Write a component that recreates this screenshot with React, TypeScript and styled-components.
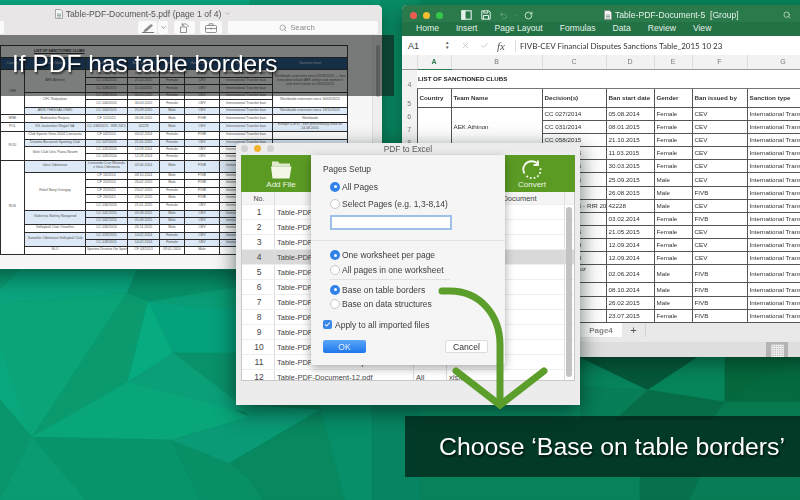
import React from "react";
import styled, { createGlobalStyle } from "styled-components";
import { Check, ChevronDown, RotateCw, Search, Undo2, X } from "lucide-react";

const GlobalStyle = createGlobalStyle`
  html, body { margin: 0; padding: 0; background: #07845c; }
  * { box-sizing: border-box; }
`;

const SANS = `"Liberation Sans", Arial, sans-serif`;

/* ---------- desktop ---------- */
const Stage = styled.div`
  position: relative;
  width: 800px;
  height: 500px;
  overflow: hidden;
  font-family: ${SANS};
`;

const Wallpaper = styled.svg`
  position: absolute;
  inset: 0;
  display: block;
`;

const facets: [string, string][] = [
  ["0,0 800,0 800,500 0,500", "#07845c"],
  ["0,0 250,0 250,270 0,270", "#0bae86"],
  ["250,0 420,0 400,170 250,170", "#0a9f76"],
  ["420,0 800,0 800,20 420,20", "#08895e"],
  ["380,0 420,0 420,170 380,170", "#0a9169"],
  ["0,303 127,293 32,437 0,345", "#0ba378"],
  ["0,270 20,270 0,290", "#0a9a72"],
  ["20,270 137,270 127,293 0,303 0,290", "#0aa47e"],
  ["137,270 250,270 250,290 148,302 127,293", "#078f68"],
  ["148,302 250,285 250,312", "#0a9c74"],
  ["127,293 148,302 128,382 32,437", "#0a9a6e"],
  ["148,302 250,312 250,353 173,353", "#05a07c"],
  ["148,302 173,353 128,382", "#06ab7f"],
  ["173,353 250,353 250,412", "#09916a"],
  ["128,382 173,353 250,412 233,410", "#0b9f78"],
  ["32,437 128,382 233,410 250,417 172,440", "#09a67a"],
  ["0,345 32,437 0,400", "#0aa77c"],
  ["0,400 32,437 0,500", "#0a966c"],
  ["32,437 172,440 200,500 85,500", "#08946a"],
  ["32,437 85,500 0,500", "#0b9b72"],
  ["172,440 250,417 262,500 200,500", "#098f66"],
  ["240,405 320,410 230,463 172,440 250,417", "#0a9a75"],
  ["230,463 320,410 330,410 345,500 262,500 250,480", "#08885f"],
  ["320,405 372,405 372,500 345,500", "#078f69"],
  ["372,405 420,405 420,500 372,500", "#078562"],
  ["420,477 640,477 640,500 420,500", "#07825a"],
  ["640,477 700,477 690,500 640,500", "#07714e"],
  ["700,477 800,477 800,500 690,500", "#077c56"],
  ["580,357 698,357 648,390", "#05583a"],
  ["698,357 725,357 725,402 648,390", "#07855a"],
  ["725,357 800,357 725,402", "#05673c"],
  ["725,402 800,357 800,402", "#056a40"],
  ["580,386 648,390 615,420 580,420", "#077d58"],
  ["648,390 725,402 712,420 615,420", "#066d46"],
  ["725,402 800,402 800,420 712,420", "#07794f"],
  ["420,405 580,405 580,420 420,420", "#0a8a64"],
];

const Banner = styled.div<{ $tone: "grey" | "green" }>`
  position: absolute;
  display: flex;
  align-items: center;
  color: #fff;
  background: ${(p) => (p.$tone === "grey" ? "rgba(20, 22, 22, 0.56)" : "rgba(0, 15, 10, 0.64)")};
  text-shadow: 1px 2px 2px rgba(0, 0, 0, 0.65);
`;

const TopBanner = styled(Banner)`
  left: 0;
  top: 35px;
  width: 394px;
  height: 61px;
  padding: 0 0 3px 12px;
  font-size: 24.5px;
`;

const BottomBanner = styled(Banner)`
  left: 405px;
  top: 416px;
  width: 395px;
  height: 61px;
  padding: 0 0 0 34px;
  font-size: 24.8px;
  white-space: nowrap;
`;

const Arrow = styled.svg`
  position: absolute;
  left: 430px;
  top: 280px;
  filter: blur(0.3px);
`;

/* ---------- preview window ---------- */
const PreviewWindow = styled.div`
  position: absolute;
  left: -100px;
  top: 5px;
  width: 482px;
  height: 264px;
  display: flex;
  flex-direction: column;
  border-radius: 5px 5px 0 0;
  overflow: hidden;
  background: #f6f6f6;
  box-shadow: 0 6px 22px rgba(0, 30, 20, 0.55);
  filter: blur(0.3px);
`;

const PreviewTitle = styled.div`
  height: 15px;
  display: flex;
  align-items: center;
  justify-content: center;
  gap: 3px;
  padding: 2px 0 0 4px;
  background: #e8e6e7;
  color: #555;
  font-size: 8.6px;
  white-space: nowrap;
`;

const PreviewToolbar = styled.div`
  height: 15px;
  display: flex;
  align-items: flex-start;
  padding: 1px 4px 0 0;
  background: #e8e6e7;
`;

const ToolChip = styled.div<{ $w: number; $gap?: number }>`
  width: ${(p) => p.$w}px;
  height: 13px;
  margin-right: ${(p) => p.$gap ?? 0}px;
  display: flex;
  align-items: center;
  justify-content: center;
  gap: 3px;
  border-radius: 2px;
  background: #fafafa;
  color: #8a8a8a;
  font-size: 7.8px;
`;

const LeftChip = styled(ToolChip)`
  margin-right: 134px;
`;

const SearchChip = styled(ToolChip)`
  padding-right: 12px;
`;

const PreviewBody = styled.div`
  flex: 1;
  display: flex;
  min-height: 0;
`;

const PageArea = styled.div`
  flex: 1;
  padding: 10px 0 0 100px;
  background: #f7f7f7;
  overflow: hidden;
`;

const Track = styled.div`
  width: 10px;
  padding: 10px 2px 0 3px;
  background: #efefef;
  border-left: 1px solid #e0e0e0;
`;

const Thumb = styled.div`
  height: 52px;
  border-radius: 3px;
  background: #b9b9b9;
`;

const PdfTable = styled.table`
  width: 347px;
  table-layout: fixed;
  border-collapse: collapse;
  background: #fff;
  color: #555;
  font-size: 3.5px;
  line-height: 3.8px;
  text-align: center;
`;

const PdfCell = styled.td<{ $blue?: boolean }>`
  padding: 0 1px;
  border: 1px solid #2c2c2c;
  overflow: hidden;
  white-space: nowrap;
  background: ${(p) => (p.$blue ? "#dde9f6" : "#fff")};
`;

const PdfWrapCell = styled(PdfCell)`
  white-space: normal;
`;

const PdfHeadCell = styled.th`
  padding: 0;
  border: 1px solid #2c2c2c;
  background: #1d4e86;
  color: #dfe8f2;
  font-weight: normal;
  overflow: hidden;
`;

const PdfCaption = styled.td`
  border: 1px solid #2c2c2c;
  text-align: left;
  padding-left: 33px;
  color: #222;
  font-weight: bold;
  text-decoration: underline;
`;

type Span = [string, number];
type PdfRow = {
  h: number;
  country?: Span;
  team?: Span;
  dec: string;
  date: string;
  gender: string;
  by: string;
  level?: Span | null;
  blue?: boolean;
};

const pdfCols = [24, 61, 42, 32, 25, 35, 53, 75];
const pdfHeads = ["Country", "Team Name", "Decision(s)", "Ban start date", "Gender", "Ban issued by", "Sanction type", "Sanction level"];

const pdfRows: PdfRow[] = [
  { h: 8, country: ["UKE", 6], team: ["AEK Athinon", 3], dec: "CC 031/2014", date: "08.01.2015", gender: "Female", by: "CEV", level: ["Worldwide extension since 07/09/2015 — ban extended to both AEK athlon and women's and men's team on 28/01/2015", 3] },
  { h: 7, dec: "CC 056/2015", date: "21.10.2015", gender: "Female", by: "CEV", level: null },
  { h: 8, dec: "CC 028/2015", date: "11.03.2015", gender: "Female", by: "CEV", level: null },
  { h: 7, team: ["CFC Nafpaktou", 2], dec: "CC 039/2015", date: "30.03.2015", gender: "Female", by: "CEV", level: ["Worldwide extension since 30/03/2015", 2] },
  { h: 8, dec: "CC 040/2015", date: "30.03.2015", gender: "Female", by: "CEV", level: null },
  { h: 7, team: ["ARIS THESSALONIKI", 1], dec: "CC 004/2015", date: "25.09.2015", gender: "Male", by: "CEV", level: ["Worldwide extension since 18/10/2015", 1], blue: true },
  { h: 8, country: ["MNE", 1], team: ["Budvanksi Rivijera", 1], dec: "CF 12/2015", date: "26.08.2015", gender: "Male", by: "FIVB", level: ["Worldwide", 1] },
  { h: 7, country: ["POL", 1], team: ["KS Jastrzebie Wegiel SA", 1], dec: "CC 036/2015 - RfR 2015", date: "42228", gender: "Male", by: "CEV", level: ["Europe (CEV) - ban provisionally lifted on 24.08.2015", 1], blue: true },
  { h: 8, country: ["ROU", 4], team: ["Club Sportiv Vieto 2004 Constanta", 1], dec: "CF 04/2014", date: "03.02.2014", gender: "Female", by: "FIVB" },
  { h: 7, team: ["Dinamo Bucuresti Sporting Club", 1], dec: "CC 047/2015", date: "21.05.2015", gender: "Female", by: "CEV", blue: true },
  { h: 7, team: ["Volei Club Unic Piatra Neamt", 2], dec: "CC 025/2014", date: "12.09.2014", gender: "Female", by: "CEV" },
  { h: 7, dec: "CC 026/2014", date: "12.09.2014", gender: "Female", by: "CEV" },
  { h: 12, country: ["RUS", 12], team: ["Iskra Odintsovo", 1], dec: "Leonardo Cruz Miranda v Iskra Odintsovo", date: "02.06.2014", gender: "Male", by: "FIVB", blue: true },
  { h: 7, team: ["Fakel Novy Urengoy", 5], dec: "CF 16/2014", date: "08.10.2014", gender: "Male", by: "FIVB" },
  { h: 8, dec: "CF 20/2014", date: "26.02.2015", gender: "Male", by: "FIVB" },
  { h: 7, dec: "CF 25/2015", date: "23.07.2015", gender: "Female", by: "FIVB" },
  { h: 8, dec: "CF 26/2015", date: "23.07.2015", gender: "Male", by: "FIVB" },
  { h: 8, dec: "CC 036/2014", date: "21.01.2015", gender: "Female", by: "CEV" },
  { h: 7, team: ["Gubernia Nizhny Novgorod", 2], dec: "CC 041/2015", date: "05.08.2015", gender: "Male", by: "CEV", blue: true },
  { h: 7, dec: "CC 042/2015", date: "05.08.2015", gender: "Male", by: "CEV", blue: true },
  { h: 8, team: ["Volleyball Club Ornioflex", 1], dec: "CC 030/2014", date: "26.11.2015", gender: "Male", by: "CEV" },
  { h: 7, team: ["Samotlor Odintsovo Volleyball Club", 2], dec: "CC 019/2015", date: "14.02.2014", gender: "Female", by: "CEV", blue: true },
  { h: 7, dec: "CC 018/2015", date: "14.02.2014", gender: "Female", by: "CEV", blue: true },
  { h: 8, country: ["SLO", 1], team: ["Sportno Drustvo Go Sport", 1], dec: "CF 03/2013", date: "09.01.2014", gender: "Male", by: "FIVB" },
];

const PdfSheet = () => (
  <PdfTable>
    <colgroup>
      {pdfCols.map((w, i) => (
        <col key={i} width={w} />
      ))}
    </colgroup>
    <tbody>
      <tr style={{ height: 12 }}>
        <PdfCaption colSpan={8}>LIST OF SANCTIONED CLUBS</PdfCaption>
      </tr>
      <tr style={{ height: 12 }}>
        {pdfHeads.map((h) => (
          <PdfHeadCell key={h}>{h}</PdfHeadCell>
        ))}
      </tr>
      {pdfRows.map((r, i) => (
        <tr key={i} style={{ height: r.h }}>
          {r.country && <PdfCell rowSpan={r.country[1]}>{r.country[0]}</PdfCell>}
          {r.team && (
            <PdfCell rowSpan={r.team[1]} $blue={r.blue}>
              {r.team[0]}
            </PdfCell>
          )}
          <PdfWrapCell $blue={r.blue}>{r.dec}</PdfWrapCell>
          <PdfCell $blue={r.blue}>{r.date}</PdfCell>
          <PdfCell $blue={r.blue}>{r.gender}</PdfCell>
          <PdfCell $blue={r.blue}>{r.by}</PdfCell>
          <PdfCell $blue={r.blue}>International Transfer ban</PdfCell>
          {r.level === null ? null : (
            <PdfWrapCell rowSpan={r.level ? r.level[1] : 1} $blue={r.blue}>
              {r.level ? r.level[0] : ""}
            </PdfWrapCell>
          )}
        </tr>
      ))}
    </tbody>
  </PdfTable>
);

/* ---------- excel window ---------- */
const ExcelWindow = styled.div`
  position: absolute;
  left: 402px;
  top: 5px;
  width: 420px;
  height: 352px;
  display: flex;
  flex-direction: column;
  border-radius: 5px 0 0 0;
  overflow: hidden;
  background: #fff;
  box-shadow: 0 5px 20px rgba(0, 30, 20, 0.55);
  filter: blur(0.3px);
`;

const ExcelTitle = styled.div`
  height: 17px;
  display: flex;
  align-items: center;
  padding: 3px 0 0 8px;
  background: #2a7a4c;
  color: #e8f1ec;
  font-size: 8.6px;
`;

const Light = styled.span<{ $c: string }>`
  width: 7px;
  height: 7px;
  margin-right: 6px;
  border-radius: 50%;
  background: ${(p) => p.$c};
`;

const QuickIcons = styled.div`
  width: 155px;
  display: flex;
  align-items: center;
  padding-left: 12px;
  color: #d8e8de;
`;

const QuickSlot = styled.span<{ $w: number }>`
  width: ${(p) => p.$w}px;
  display: flex;
  align-items: center;
`;

const ExcelName = styled.span`
  display: flex;
  align-items: center;
  gap: 3px;
  white-space: pre;
`;

const ExcelSearch = styled.span`
  display: flex;
  align-items: center;
  margin-left: 44px;
  font-size: 8px;
`;

const Ribbon = styled.div`
  height: 14px;
  display: flex;
  align-items: center;
  gap: 17px;
  padding: 0 0 2px 14px;
  background: #237245;
  color: #e2efe7;
  font-size: 8.6px;
`;

const FormulaBar = styled.div`
  height: 19px;
  display: flex;
  align-items: center;
  background: #fff;
  color: #333;
  font-size: 9px;
`;

const CellName = styled.span`
  width: 43px;
  padding-left: 6px;
`;

const Stepper = styled.span`
  width: 11px;
  color: #555;
  font-size: 4.5px;
  line-height: 4.5px;
`;

const FormulaTool = styled.span`
  width: 19px;
  display: flex;
  justify-content: center;
  color: #bdbdbd;
`;

const Fx = styled.span`
  width: 22px;
  padding-left: 3px;
  border-right: 1px solid #ddd;
  color: #555;
  font-family: "Liberation Serif", serif;
  font-size: 11px;
  font-style: italic;
`;

const FormulaText = styled.span`
  padding-left: 4px;
  font-family: Lato, sans-serif;
  font-size: 8px;
  white-space: nowrap;
`;

const SheetArea = styled.div`
  flex: 1;
  min-height: 0;
  overflow: hidden;
`;

const ExcelTable = styled.table`
  width: 417px;
  table-layout: fixed;
  border-collapse: collapse;
  color: #333;
  font-size: 6.25px;
`;

const ColHead = styled.th<{ $active?: boolean }>`
  height: 14px;
  padding: 0;
  background: #f2f2f2;
  border-right: 1px solid #ddd;
  border-bottom: ${(p) => (p.$active ? "1px solid #2a7a4c" : "1px solid #9a9a9a")};
  color: ${(p) => (p.$active ? "#2a7a4c" : "#777")};
  font-size: 7px;
  font-weight: ${(p) => (p.$active ? "bold" : "normal")};
`;

const RowHead = styled.th`
  padding: 0;
  background: #f2f2f2;
  color: #777;
  font-size: 7px;
  font-weight: normal;
  vertical-align: bottom;
`;

const Td = styled.td<{ $strong?: boolean; $top?: boolean }>`
  padding: 0 1px 0 2px;
  border: 1px solid #555;
  overflow: hidden;
  white-space: nowrap;
  font-weight: ${(p) => (p.$strong ? "bold" : "normal")};
  vertical-align: ${(p) => (p.$top ? "top" : "middle")};
`;

const TitleTd = styled.td`
  padding: 0 1px;
  border-bottom: 1px solid #777;
  color: #222;
  font-size: 6.2px;
  font-weight: bold;
`;

const excelCols = [15, 34, 91, 64, 48, 38, 55, 72];
const excelLetters = ["A", "B", "C", "D", "E", "F", "G"];
const excelHeads = ["Country", "Team Name", "Decision(s)", "Ban start date", "Gender", "Ban issued by", "Sanction type"];

const excelRows: [number, string, string, string, string][] = [
  [13, "CC 027/2014", "05.08.2014", "Female", "CEV"],
  [13, "CC 031/2014", "08.01.2015", "Female", "CEV"],
  [13, "CC 058/2015", "21.10.2015", "Female", "CEV"],
  [13, "CC 028/2015", "11.03.2015", "Female", "CEV"],
  [13, "CC 039/2015", "30.03.2015", "Female", "CEV"],
  [14, "CC 004/2015", "25.09.2015", "Male", "CEV"],
  [13, "CF 12/2015", "26.08.2015", "Male", "FIVB"],
  [13, "CC 036/2015 - RfR 2015", "42228", "Male", "CEV"],
  [13, "CF 04/2014", "03.02.2014", "Female", "FIVB"],
  [13, "CC 047/2015", "21.05.2015", "Female", "CEV"],
  [13, "CC 025/2014", "12.09.2014", "Female", "CEV"],
  [13, "CC 026/2014", "12.09.2014", "Female", "CEV"],
  [18, "Leonardo Cruz", "02.06.2014", "Male", "FIVB"],
  [14, "CF 16/2014", "08.10.2014", "Male", "FIVB"],
  [13, "CF 20/2014", "26.02.2015", "Male", "FIVB"],
  [13, "CF 25/2015", "23.07.2015", "Female", "FIVB"],
  [13, "CF 26/2015", "", "", ""],
];

const ExcelSheet = () => (
  <ExcelTable>
    <colgroup>
      {excelCols.map((w, i) => (
        <col key={i} width={w} />
      ))}
    </colgroup>
    <tbody>
      <tr>
        <ColHead />
        {excelLetters.map((l, i) => (
          <ColHead key={l} $active={i === 0}>
            {l}
          </ColHead>
        ))}
      </tr>
      <tr style={{ height: 19 }}>
        <RowHead>4</RowHead>
        <TitleTd colSpan={7}>LIST OF SANCTIONED CLUBS</TitleTd>
      </tr>
      <tr style={{ height: 19 }}>
        <RowHead>5</RowHead>
        {excelHeads.map((h) => (
          <Td key={h} $strong>
            {h}
          </Td>
        ))}
      </tr>
      {excelRows.map((r, i) => (
        <tr key={i} style={{ height: r[0] }}>
          <RowHead>{i + 6}</RowHead>
          {i === 0 && <Td rowSpan={3} />}
          {i === 0 && <Td rowSpan={3}>AEK Athinon</Td>}
          {i === 3 && <Td rowSpan={14} />}
          {i === 3 && <Td rowSpan={14} />}
          <Td $top={r[0] === 18}>{r[1]}</Td>
          <Td>{r[2]}</Td>
          <Td>{r[3]}</Td>
          <Td>{r[4]}</Td>
          <Td>{r[2] ? "International Transfer ban" : ""}</Td>
        </tr>
      ))}
    </tbody>
  </ExcelTable>
);

const SheetTabs = styled.div`
  height: 19px;
  display: flex;
  align-items: flex-start;
  padding-left: 170px;
  background: #e9e9e9;
  color: #666;
  font-size: 8px;
`;

const SheetTab = styled.div`
  width: 50px;
  height: 14px;
  display: flex;
  align-items: center;
  justify-content: center;
  padding-left: 8px;
  background: #fff;
  font-weight: bold;
  color: #888;
`;

const AddSheet = styled.div`
  width: 24px;
  height: 14px;
  display: flex;
  align-items: center;
  justify-content: center;
  border-right: 1px solid #d5d5d5;
  color: #555;
  font-size: 11px;
`;

const StatusBar = styled.div`
  height: 15px;
  display: flex;
  justify-content: flex-end;
  padding-right: 34px;
  background: #dedede;
`;

const ViewToggle = styled.div`
  width: 22px;
  display: flex;
  align-items: center;
  justify-content: center;
  background: #b4b4b4;
  color: #f2f2f2;
`;

/* ---------- pdf to excel dialog ---------- */
const AppWindow = styled.div`
  position: absolute;
  left: 236px;
  top: 143px;
  width: 344px;
  height: 262px;
  display: flex;
  flex-direction: column;
  padding: 0 5px;
  border-radius: 4px 4px 0 0;
  background: #ececec;
  box-shadow: 0 6px 22px rgba(0, 20, 15, 0.6);
  filter: blur(0.3px);
`;

const AppTitle = styled.div`
  position: relative;
  height: 12px;
  display: flex;
  align-items: center;
  justify-content: center;
  color: #555;
  font-size: 8.3px;
`;

const AppLights = styled.div`
  position: absolute;
  left: 0;
  top: 2px;
  display: flex;
  gap: 6px;
`;

const AppLight = styled.span<{ $c: string }>`
  width: 7px;
  height: 7px;
  border-radius: 50%;
  background: ${(p) => p.$c};
`;

const GreenBar = styled.div`
  height: 37px;
  display: flex;
  justify-content: space-between;
  padding-right: 3px;
  background: #5b9b24;
`;

const ToolButton = styled.div`
  width: 80px;
  display: flex;
  flex-direction: column;
  align-items: center;
  justify-content: flex-end;
  padding-bottom: 3px;
  color: #eef6e4;
  font-size: 8px;
`;

const FileList = styled.div`
  position: relative;
  height: 189px;
  overflow: hidden;
  background: #fff;
  border: 1px solid #c8c8c8;
  border-top: none;
`;

const ListRow = styled.div<{ $on?: boolean; $head?: boolean }>`
  height: ${(p) => (p.$head ? 13 : 15)}px;
  display: grid;
  grid-template-columns: 33px 139px 33px 118px 1fr;
  align-items: center;
  background: ${(p) => (p.$on ? "#d9d9d9" : p.$head ? "#f4f4f4" : "#fff")};
  border-bottom: 1px solid #eeeeee;
  color: #444;
  font-size: 7.5px;
`;

const ListCell = styled.span`
  height: 100%;
  display: flex;
  align-items: center;
  padding-left: 2px;
  border-right: 1px solid #dedede;
  white-space: nowrap;
  overflow: hidden;
`;

const ListNo = styled(ListCell)<{ $head?: boolean }>`
  justify-content: center;
  font-size: ${(p) => (p.$head ? 7 : 8.5)}px;
`;

const DocHead = styled(ListCell)`
  padding-left: 35px;
`;

const ListBar = styled.div`
  position: absolute;
  right: 2px;
  top: 15px;
  width: 6px;
  height: 170px;
  border-radius: 3px;
  background: #c3c3c3;
`;

const SetupSheet = styled.div`
  position: absolute;
  left: 75px;
  top: 12px;
  width: 194px;
  height: 210px;
  display: flex;
  flex-direction: column;
  padding: 9px 0 0 12px;
  background: #f5f5f5;
  box-shadow: 0 3px 10px rgba(0, 0, 0, 0.35);
  color: #3c3c3c;
  font-size: 8.5px;
  border-radius: 0 0 3px 3px;
`;

const SetupHeading = styled.div`
  margin-bottom: 4px;
  font-size: 8.4px;
`;

const OptionList = styled.div`
  display: flex;
  flex-direction: column;
  padding-left: 7px;
`;

const Option = styled.label<{ $h?: number }>`
  height: ${(p) => p.$h ?? 14.5}px;
  display: flex;
  align-items: center;
  gap: 2px;
  white-space: nowrap;
`;

const Radio = styled.span<{ $on?: boolean }>`
  width: 10px;
  height: 10px;
  display: flex;
  align-items: center;
  justify-content: center;
  border-radius: 50%;
  background: ${(p) => (p.$on ? "#3182ea" : "#fff")};
  border: ${(p) => (p.$on ? "none" : "1px solid #c9c9c9")};

  &::after {
    content: "";
    width: 3px;
    height: 3px;
    border-radius: 50%;
    background: ${(p) => (p.$on ? "#fff" : "transparent")};
  }
`;

const PagesInput = styled.div`
  width: 122px;
  height: 15px;
  margin: 3px 0 0 7px;
  background: #fff;
  border: 2px solid #9dc0e8;
`;

const Rule = styled.hr<{ $short?: boolean }>`
  width: ${(p) => (p.$short ? "120px" : "194px")};
  margin: ${(p) => (p.$short ? "2px 0 2.5px 7px" : "10px 0 7px -12px")};
  border: none;
  border-top: 1px solid #e2e2e2;
`;

const ApplyRow = styled.label`
  height: 11px;
  margin-top: 7.5px;
  display: flex;
  align-items: center;
  gap: 3px;
`;

const CheckBox = styled.span`
  width: 9px;
  height: 9px;
  display: flex;
  align-items: center;
  justify-content: center;
  border-radius: 2px;
  background: #3a86e8;
  color: #fff;
`;

const SetupActions = styled.div`
  width: 165px;
  margin-top: 10px;
  display: flex;
  justify-content: space-between;
`;

const DialogButton = styled.button<{ $primary?: boolean }>`
  width: 43px;
  height: 13px;
  padding: 0;
  border: ${(p) => (p.$primary ? "none" : "1px solid #dcdcdc")};
  border-radius: 2px;
  background: ${(p) => (p.$primary ? "linear-gradient(#5aa6f8, #1f78ec)" : "#fff")};
  color: ${(p) => (p.$primary ? "#e8f2ff" : "#333")};
  font-family: ${SANS};
  font-size: 8.6px;
`;

/* ---------- small drawings ---------- */
const DocIcon = () => (
  <svg width="8" height="10" viewBox="0 0 8 10">
    <path d="M.5.5h5l2 2v7h-7z" fill="#f4f4f4" stroke="#8a8a8a" strokeWidth=".7" />
    <path d="M2 5h4M2 6.5h4M2 8h4" stroke="#7a9a8a" strokeWidth=".8" />
  </svg>
);

const PenIcon = () => (
  <svg width="14" height="10" viewBox="0 0 14 10">
    <path d="M3 7 10 1l2 1.500L5.500 8.500 2.500 9z" fill="#8d8d8d" />
    <path d="M1 9.500h12" stroke="#555" strokeWidth=".8" />
  </svg>
);

const RotateIcon = () => (
  <svg width="11" height="11" viewBox="0 0 11 11" fill="none" stroke="#777" strokeWidth=".8">
    <rect x="1.500" y="5" width="6" height="5.500" />
    <path d="M3 3.200C5 1 8.500 1.500 9.500 5M3 3.200 3.300 1M3 3.200 5.200 3.500" />
  </svg>
);

const KitIcon = () => (
  <svg width="12" height="10" viewBox="0 0 12 10" fill="none" stroke="#777" strokeWidth=".8">
    <rect x=".5" y="2.500" width="11" height="7" rx="1" />
    <path d="M4 2.500V.8h4v1.700M.5 5.500h11M6 4.500v2" />
  </svg>
);

const SidebarIcon = () => (
  <svg width="11" height="10" viewBox="0 0 11 10" fill="none" stroke="#e6f0ea" strokeWidth="1.100">
    <rect x=".8" y=".8" width="9.400" height="8.400" />
    <rect x="1" y="1" width="3" height="8" fill="#e6f0ea" />
  </svg>
);

const SaveIcon = () => (
  <svg width="10" height="10" viewBox="0 0 10 10" fill="none" stroke="#e6f0ea" strokeWidth="1">
    <path d="M.8.8h7l1.400 1.400v7H.8z" />
    <path d="M2.500 9V5.500h5V9M2.800 1v2h4V1" />
  </svg>
);

const FolderIcon = () => (
  <svg width="22" height="20" viewBox="0 0 22 20">
    <path d="M2 1.500h6l1.500 2H20v3H2z" fill="#dfe9cf" />
    <path d="M1 6.500h20.500l-2 12H2.500z" fill="#f4f6e8" />
  </svg>
);

const ConvertIcon = () => (
  <svg width="22" height="21" viewBox="0 0 22 21" fill="none" stroke="#f4f8ec" strokeWidth="1.800">
    <path d="M17.500 5.500C14 1 7 1.300 4 5.500 1.800 8.500 2 12 3.500 14.500" />
    <path d="M17 1.500v4.500h-4.500" />
    <path d="M5.500 17c3.500 3 9 2.800 12-.5 1.800-2 2.500-5 1.800-7.500" strokeDasharray="1.800 2" />
  </svg>
);

const rows = Array.from({ length: 12 }, (_, i) => i + 1);

export default function App() {
  return (
    <Stage>
      <GlobalStyle />
      <Wallpaper width="800" height="500" viewBox="0 0 800 500">
        {facets.map(([points, fill]) => (
          <polygon key={points} points={points} fill={fill} stroke={fill} strokeWidth=".6" />
        ))}
      </Wallpaper>

      <PreviewWindow>
        <PreviewTitle>
          <DocIcon />
          Table-PDF-Document-5.pdf (page 1 of 4)
          <ChevronDown size={7} color="#999" />
        </PreviewTitle>
        <PreviewToolbar>
          <LeftChip $w={104} />
          <ToolChip $w={19} $gap={1}>
            <PenIcon />
          </ToolChip>
          <ToolChip $w={10} $gap={6}>
            <ChevronDown size={7} color="#555" />
          </ToolChip>
          <ToolChip $w={21} $gap={5}>
            <RotateIcon />
          </ToolChip>
          <ToolChip $w={22} $gap={6}>
            <KitIcon />
          </ToolChip>
          <SearchChip $w={150}>
            <Search size={8} />
            Search
          </SearchChip>
        </PreviewToolbar>
        <PreviewBody>
          <PageArea>
            <PdfSheet />
          </PageArea>
          <Track>
            <Thumb />
          </Track>
        </PreviewBody>
      </PreviewWindow>

      <ExcelWindow>
        <ExcelTitle>
          <Light $c="#ee5b52" />
          <Light $c="#f2bd30" />
          <Light $c="#34c84a" />
          <QuickIcons>
            <QuickSlot $w={20}>
              <SidebarIcon />
            </QuickSlot>
            <QuickSlot $w={18}>
              <SaveIcon />
            </QuickSlot>
            <QuickSlot $w={14}>
              <Undo2 size={9} color="#6fa587" />
            </QuickSlot>
            <QuickSlot $w={11}>
              <ChevronDown size={5} color="#6fa587" />
            </QuickSlot>
            <QuickSlot $w={10}>
              <RotateCw size={9} strokeWidth={2.4} />
            </QuickSlot>
          </QuickIcons>
          <ExcelName>
            <DocIcon />
            Table-PDF-Document-5  [Group]
          </ExcelName>
          <ExcelSearch>
            <Search size={8} />
          </ExcelSearch>
        </ExcelTitle>
        <Ribbon>
          <span>Home</span>
          <span>Insert</span>
          <span>Page Layout</span>
          <span>Formulas</span>
          <span>Data</span>
          <span>Review</span>
          <span>View</span>
        </Ribbon>
        <FormulaBar>
          <CellName>A1</CellName>
          <Stepper>
            ▲
            <br />▼
          </Stepper>
          <FormulaTool>
            <X size={9} />
          </FormulaTool>
          <FormulaTool>
            <Check size={9} />
          </FormulaTool>
          <Fx>fx</Fx>
          <FormulaText>FIVB-CEV Financial Disputes Sanctions Table_2015 10 23</FormulaText>
        </FormulaBar>
        <SheetArea>
          <ExcelSheet />
        </SheetArea>
        <SheetTabs>
          <SheetTab>Page4</SheetTab>
          <AddSheet>+</AddSheet>
        </SheetTabs>
        <StatusBar>
          <ViewToggle>▦</ViewToggle>
        </StatusBar>
      </ExcelWindow>

      <AppWindow>
        <AppTitle>
          <AppLights>
            <AppLight $c="#d2d2d2" />
            <AppLight $c="#f2b430" />
            <AppLight $c="#d2d2d2" />
          </AppLights>
          PDF to Excel
        </AppTitle>
        <GreenBar>
          <ToolButton>
            <FolderIcon />
            Add File
          </ToolButton>
          <ToolButton>
            <ConvertIcon />
            Convert
          </ToolButton>
        </GreenBar>
        <FileList>
          <ListRow $head>
            <ListNo $head>No.</ListNo>
            <ListCell />
            <ListCell />
            <DocHead>Open Document</DocHead>
          </ListRow>
          {rows.map((n) => (
            <ListRow key={n} $on={n === 4}>
              <ListNo>{n}</ListNo>
              <ListCell>Table-PDF-Document-{n}.pdf</ListCell>
              <ListCell>All</ListCell>
              <ListCell>xlsx</ListCell>
            </ListRow>
          ))}
          <ListBar />
        </FileList>
        <SetupSheet>
          <SetupHeading>Pages Setup</SetupHeading>
          <OptionList>
            <Option $h={17}>
              <Radio $on />
              All Pages
            </Option>
            <Option $h={17}>
              <Radio />
              Select Pages (e.g. 1,3-8,14)
            </Option>
          </OptionList>
          <PagesInput />
          <Rule />
          <OptionList>
            <Option>
              <Radio $on />
              One worksheet per page
            </Option>
            <Option>
              <Radio />
              All pages in one worksheet
            </Option>
          </OptionList>
          <Rule $short />
          <OptionList>
            <Option>
              <Radio $on />
              Base on table borders
            </Option>
            <Option>
              <Radio />
              Base on data structures
            </Option>
          </OptionList>
          <ApplyRow>
            <CheckBox>
              <Check size={7} strokeWidth={3.5} />
            </CheckBox>
            Apply to all imported files
          </ApplyRow>
          <SetupActions>
            <DialogButton $primary>OK</DialogButton>
            <DialogButton>Cancel</DialogButton>
          </SetupActions>
        </SetupSheet>
      </AppWindow>

      <Arrow width="125" height="135" viewBox="430 280 125 135" fill="none" stroke="#5c9e2b" strokeWidth="7" strokeLinecap="round" strokeLinejoin="miter">
        <path d="M442 291H450C480 291 500 315 500 345V402" />
        <path d="M456 371 500 405 544 371" />
      </Arrow>

      <TopBanner $tone="grey">If PDF has table borders</TopBanner>
      <BottomBanner $tone="green">Choose ‘Base on table borders’</BottomBanner>
    </Stage>
  );
}
